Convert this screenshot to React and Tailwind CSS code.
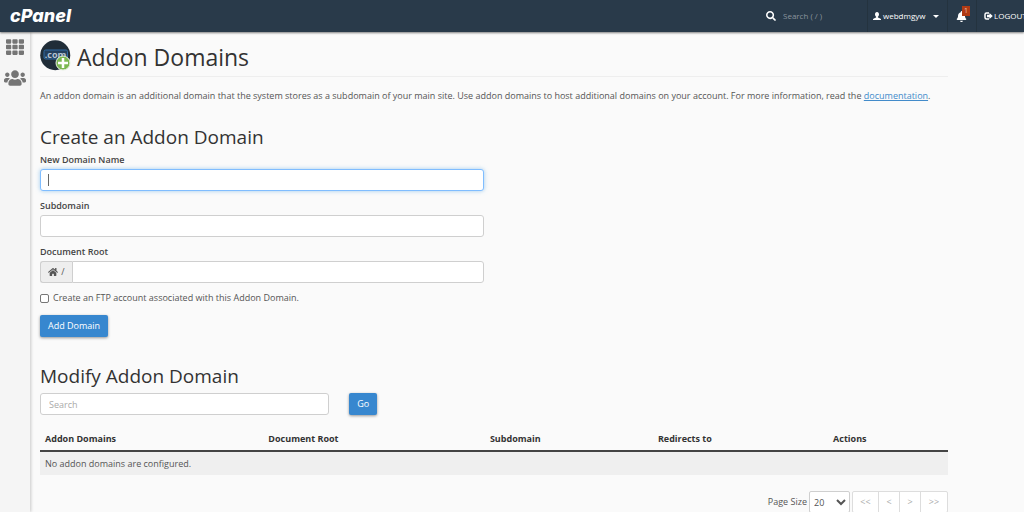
import { FaBell, FaHome, FaSearch, FaTh, FaUsers } from 'react-icons/fa';

const COLUMNS = [
  { label: 'Addon Domains', width: 'w-[24.6%]' },
  { label: 'Document Root', width: 'w-[24.4%]' },
  { label: 'Subdomain', width: 'w-[18.5%]' },
  { label: 'Redirects to', width: 'w-[19.3%]' },
  { label: 'Actions', width: 'w-[13.2%]' },
];

const PAGES = [
  { text: '<<', label: 'First page', width: 'w-[26px]' },
  { text: '<', label: 'Previous page', width: 'w-[21px]' },
  { text: '>', label: 'Next page', width: 'w-[21px]' },
  { text: '>>', label: 'Last page', width: 'w-[26px]' },
];

const UserIcon = () => (
  <svg viewBox="0 0 16 16" className="w-2 h-2" fill="currentColor" aria-hidden="true">
    <path d="M8 0C5.3 0 4 2 4 4.6c0 2 .9 3.8 2.2 4.7v1.5C5.600 11.300 0 12.400 0 14.500V16h16v-1.500c0-2.100-5.600-3.200-6.200-3.700V9.300C11.100 8.400 12 6.600 12 4.600 12 2 10.700 0 8 0z" />
  </svg>
);

const LogoutIcon = () => (
  <svg viewBox="0 0 18 16" className="w-[9px] h-2" aria-hidden="true">
    <path d="M10 2H5a3 3 0 0 0-3 3v6a3 3 0 0 0 3 3h5" fill="none" stroke="currentColor" strokeWidth="3" />
    <path d="M6 5.500h5V2L17.500 8 11 14V10.500H6z" fill="currentColor" />
  </svg>
);

const AddonIcon = () => (
  <svg viewBox="0 0 62 62" className="w-[31px] h-[31px] shrink-0" aria-hidden="true">
    <circle cx="30.500" cy="30.500" r="30" fill="#202d38" />
    <rect x="8" y="20" width="47" height="18" rx="3" fill="#243f5c" stroke="#2f6aa3" strokeWidth="2" />
    <text x="31" y="35" textAnchor="middle" fontSize="18" fontWeight="700" fill="#b4c3d2">
      .com
    </text>
    <circle cx="46" cy="46" r="14" fill="#7cb852" stroke="#e6efdf" strokeWidth="2" />
    <path d="M46 36v20M36 46h20" stroke="#fff" strokeWidth="5" />
  </svg>
);

const Header = () => (
  <header className="relative z-10 flex h-8 items-stretch overflow-hidden bg-[#293a4a] text-[8px] text-white shadow-[0_1px_2px_rgba(0,0,0,0.5)]">
    <a href="#home" className="flex items-center pb-[2px] pl-[10px] font-['Inter'] text-[18px] font-extrabold italic">
      cPanel
    </a>
    <label className="ml-auto flex w-[101px] items-center gap-[7px]">
      <FaSearch className="h-[10px] w-[10px] shrink-0" />
      <input
        type="text"
        aria-label="Search"
        placeholder="Search ( / )"
        className="w-full min-w-0 bg-transparent outline-none placeholder:text-[#8a949d]"
      />
    </label>
    <button type="button" className="flex w-[80px] items-center border-l border-[#24333f] pl-[5px] font-medium">
      <UserIcon />
      <span className="ml-[2px]">webdmgyw</span>
      <span className="ml-2 border-x-[3px] border-t-[3px] border-x-transparent border-t-white" />
    </button>
    <button
      type="button"
      aria-label="Notifications"
      className="relative flex w-[29px] items-center border-l border-[#24333f] pl-2"
    >
      <FaBell className="h-[11px] w-[11px]" />
      <span className="absolute top-[6px] left-[14px] h-[10px] w-2 bg-[#b03a14] text-center text-[7px] leading-[10px] text-[#e8c4b6]">
        1
      </span>
    </button>
    <a
      href="#logout"
      className="flex w-[48px] items-center gap-[1px] border-l border-[#24333f] pl-[7px] whitespace-nowrap"
    >
      <span className="shrink-0">
        <LogoutIcon />
      </span>
      LOGOUT
    </a>
  </header>
);

const Sidebar = () => (
  <nav className="flex w-[30px] shrink-0 flex-col items-center gap-[11px] bg-[#f5f5f5] pt-[6px] text-[#757575] shadow-[1px_0_3px_rgba(0,0,0,0.2)]">
    <a href="#tools" aria-label="Tools">
      <FaTh className="h-[18px] w-[18px]" />
    </a>
    <a href="#users" aria-label="User Manager">
      <FaUsers className="h-[22px] w-[22px]" />
    </a>
  </nav>
);

const inputClass = 'h-[22px] w-full min-w-0 border border-[#cfcfcf] bg-white px-2 outline-none';

const Field = ({ id, label, children }) => (
  <div className="mb-[9px]">
    <label htmlFor={id} className="mb-[3px] block h-3 leading-3 font-semibold text-[#444]">
      {label}
    </label>
    {children}
  </div>
);

const PrimaryButton = ({ children }) => (
  <button
    type="button"
    className="h-[22px] rounded-[2px] bg-[#3787cf] px-2 text-white shadow-[0_1px_3px_rgba(0,0,0,0.4)]"
  >
    {children}
  </button>
);

const CreateForm = () => (
  <form className="grid grid-cols-2 gap-5">
    <div>
      <Field id="domain" label="New Domain Name">
        <div className="relative">
          <input
            id="domain"
            type="text"
            className="block h-[22px] w-full rounded-[3px] border border-[#80bdff] bg-white px-2 caret-transparent shadow-[0_0_4px_rgba(102,175,233,0.6)] outline-none"
          />
          <span className="absolute top-[5px] left-2 h-3 w-px bg-[#666]" />
        </div>
      </Field>
      <Field id="subdomain" label="Subdomain">
        <input id="subdomain" type="text" className={`${inputClass} block rounded-[3px]`} />
      </Field>
      <Field id="root" label="Document Root">
        <div className="flex">
          <span className="flex h-[22px] w-8 shrink-0 items-center justify-center gap-[3px] rounded-l-[3px] border border-r-0 border-[#cfcfcf] bg-[#eee]">
            <FaHome className="h-[10px] w-[10px]" />/
          </span>
          <input id="root" type="text" className={`${inputClass} rounded-r-[3px]`} />
        </div>
      </Field>
      <label className="mb-[11px] flex h-3 items-center gap-1">
        <input
          type="checkbox"
          className="h-[9px] w-[9px] appearance-none rounded-[2px] border border-[#767676] bg-white"
        />
        Create an FTP account associated with this Addon Domain.
      </label>
      <PrimaryButton>Add Domain</PrimaryButton>
    </div>
  </form>
);

const DomainTable = () => (
  <table className="w-full table-fixed text-left">
    <thead>
      <tr className="h-6 border-b-2 border-[#444] text-[#333]">
        {COLUMNS.map(({ label, width }) => (
          <th key={label} className={`${width} px-[5px] font-bold`}>
            {label}
          </th>
        ))}
      </tr>
    </thead>
    <tbody>
      <tr className="h-6 bg-[#efefef]">
        <td colSpan={COLUMNS.length} className="px-[5px]">
          No addon domains are configured.
        </td>
      </tr>
    </tbody>
  </table>
);

const Pagination = () => (
  <div className="mt-4 flex items-center justify-end">
    <label htmlFor="page-size" className="mr-[2px]">
      Page Size
    </label>
    <select id="page-size" className="mr-[2px] h-[22px] w-[41px] rounded-[2px] border border-[#cfcfcf] bg-white">
      <option>20</option>
    </select>
    <div className="flex divide-x divide-[#ddd] rounded-[2px] border border-[#ddd] bg-white text-[#aaa]">
      {PAGES.map(({ text, label, width }) => (
        <button key={label} type="button" aria-label={label} className={`${width} h-5`}>
          {text}
        </button>
      ))}
    </div>
  </div>
);

export default function App() {
  return (
    <div className="flex h-screen flex-col overflow-hidden bg-[#fafafa] font-['Open_Sans',sans-serif] text-[9px] text-[#555]">
      <Header />
      <div className="flex min-h-0 flex-1">
        <Sidebar />
        <main className="min-w-0 flex-1 pr-[76px] pl-[10px]">
          <div className="flex items-center gap-[6px] border-b border-[#eee] pt-[7px] pb-[5px]">
            <AddonIcon />
            <h1 className="pt-1 text-[23px] leading-7 text-[#333]">Addon Domains</h1>
          </div>
          <p className="mt-[13px] leading-3">
            An addon domain is an additional domain that the system stores as a subdomain of your main site. Use addon
            domains to host additional domains on your account. For more information, read the{' '}
            <a href="#documentation" className="text-[#428bca] underline">
              documentation
            </a>
            .
          </p>
          <h2 className="mt-[23px] mb-[5px] text-[19px] leading-6 text-[#333]">Create an Addon Domain</h2>
          <CreateForm />
          <h2 className="mt-[27px] mb-[5px] text-[19px] leading-6 text-[#333]">Modify Addon Domain</h2>
          <form className="mb-3 grid grid-cols-12 gap-5">
            <input
              type="text"
              aria-label="Search domains"
              placeholder="Search"
              className={`${inputClass} col-span-4 rounded-[3px] placeholder:text-[#aaa]`}
            />
            <div>
              <PrimaryButton>Go</PrimaryButton>
            </div>
          </form>
          <DomainTable />
          <Pagination />
        </main>
      </div>
    </div>
  );
}
